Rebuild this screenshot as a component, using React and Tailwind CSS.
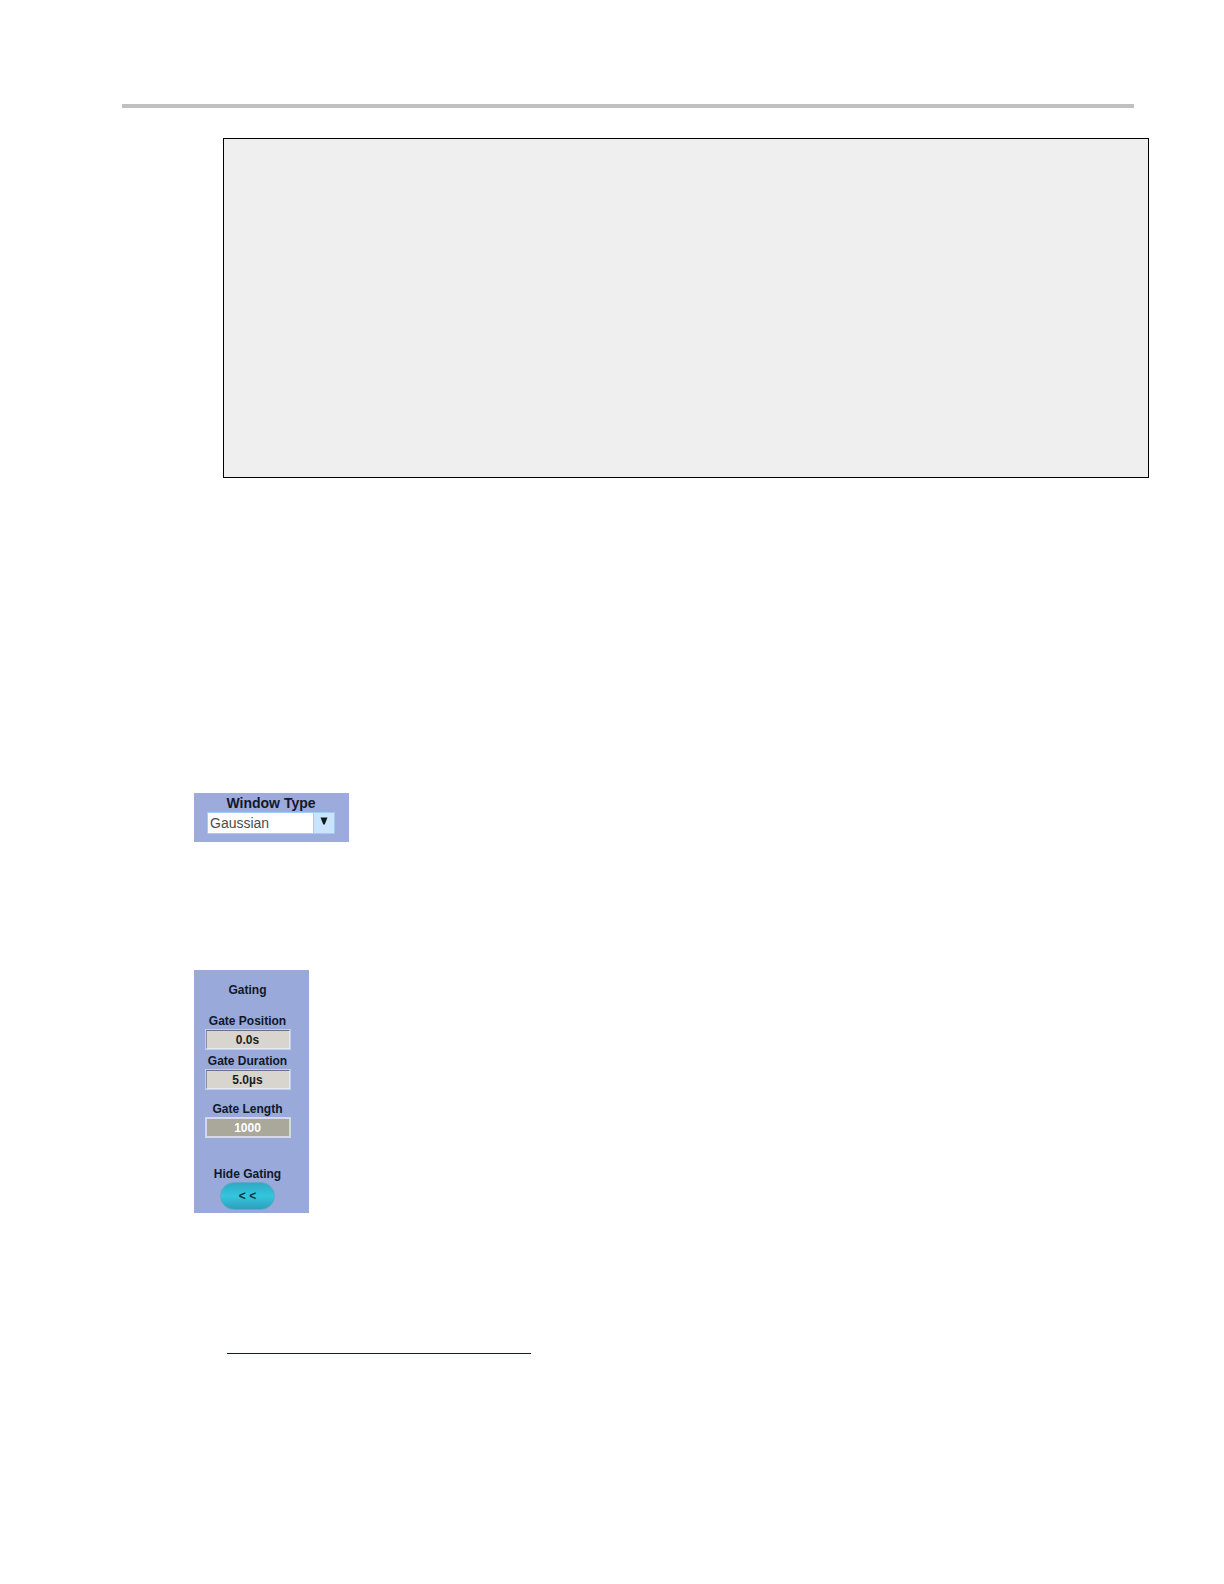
import React, { useState } from "react";

const windowTypes = ["Gaussian", "Rectangular", "Hamming", "Hanning", "Blackman"];

function WindowTypePanel() {
  let [windowType, setWindowType] = useState("Gaussian");

  return (
    <section className="w-[155px] bg-[#9dabdc] pt-px pl-[13px] pb-2">
      <label
        htmlFor="windowType"
        className="block w-32 text-center text-sm leading-[18px] font-bold text-[#12172b]"
      >
        Window Type
      </label>
      <div className="relative h-[22px] w-32">
        <select
          id="windowType"
          value={windowType}
          onChange={(e) => setWindowType(e.target.value)}
          className="block h-full w-full appearance-none border border-[#a3cbf7] bg-white pl-0.5 text-sm leading-5 text-[#4c4c4c]"
        >
          {windowTypes.map((type) => (
            <option key={type} value={type}>
              {type}
            </option>
          ))}
        </select>
        <span className="pointer-events-none absolute inset-y-0 right-0 flex w-[22px] items-center justify-center border border-[#a3cbf7] bg-[#cce3fd]">
          <svg viewBox="0 0 8 8" className="mb-1 h-2 w-2" aria-hidden="true">
            <path d="M0.5 0.5h7L4.7 7.5H3.3z" fill="#0c1f16" />
          </svg>
        </span>
      </div>
    </section>
  );
}

function GateField({ id, label, value, onChange, readOnly }) {
  return (
    <div className="flex w-full flex-col items-center">
      <label htmlFor={id}>{label}</label>
      <input
        id={id}
        type="text"
        value={value}
        onChange={onChange}
        readOnly={readOnly}
        className={`h-[21px] w-[86px] border-2 text-center ${
          readOnly
            ? "border-[#d5d8e6] bg-[#aaa79b] text-white"
            : "border-t-[#6d7088] border-r-[#e8e9f2] border-b-[#e8e9f2] border-l-[#8c90ac] bg-[#d8d5cf] text-[#1c1c1c] outline outline-[#c3cbea] -outline-offset-1"
        }`}
      />
    </div>
  );
}

function GatingPanel() {
  let [position, setPosition] = useState("0.0s");
  let [duration, setDuration] = useState("5.0µs");

  return (
    <section className="flex w-[115px] flex-col items-center bg-[#98a9da] pt-3 pr-2 pb-[3px] text-xs leading-4 font-bold text-[#12172b]">
      <h2>Gating</h2>
      <div className="mt-[15px] flex w-full flex-col gap-[3px]">
        <GateField
          id="gatePosition"
          label="Gate Position"
          value={position}
          onChange={(e) => setPosition(e.target.value)}
        />
        <GateField
          id="gateDuration"
          label="Gate Duration"
          value={duration}
          onChange={(e) => setDuration(e.target.value)}
        />
      </div>
      <div className="mt-[11px] w-full">
        <GateField id="gateLength" label="Gate Length" value="1000" readOnly />
      </div>
      <label htmlFor="hideGating" className="mt-7">
        Hide Gating
      </label>
      <button
        id="hideGating"
        type="button"
        className="h-7 w-[55px] rounded-full border border-[#62a9c9] bg-linear-to-b from-[#2fa9c4] via-[#34c6df] to-[#2f9fba] text-xs text-[#0b3440]"
      >
        &lt; &lt;
      </button>
    </section>
  );
}

export default function App() {
  return (
    <main className="min-h-screen bg-white pt-[104px] pb-16 font-['Liberation_Sans',Arial,sans-serif]">
      <hr className="mr-[90px] ml-[122px] border-t-4 border-[#c0c0c0]" />

      {/* Code listing */}
      <div className="mt-[30px] mr-[75px] ml-[223px] h-[340px] border border-black bg-[#efefef]" />

      <div className="mt-[315px] ml-[194px] flex flex-col items-start gap-32">
        <WindowTypePanel />
        <GatingPanel />
      </div>

      <a
        href="#"
        aria-label="Reference"
        className="mt-[124px] ml-[227px] block h-[17px] w-[304px] border-b border-[#0c0c9c]"
      />
    </main>
  );
}
